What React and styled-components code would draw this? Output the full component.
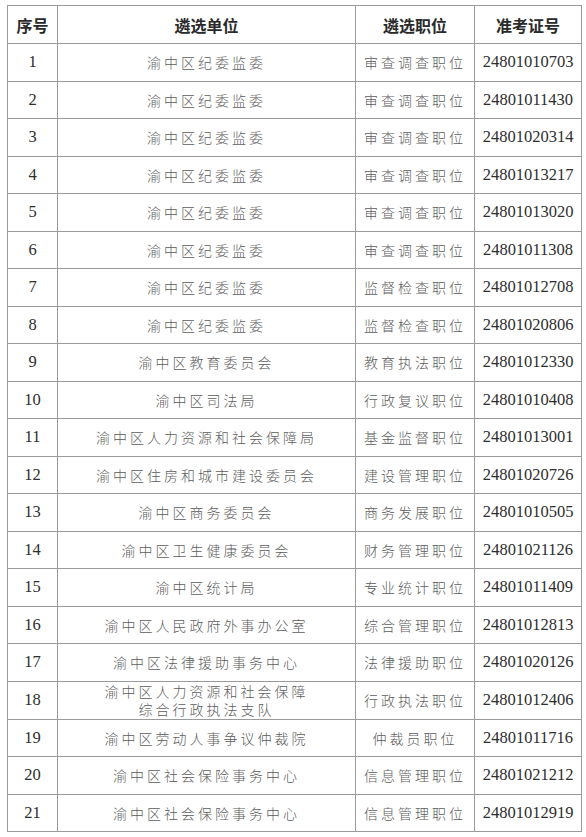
import { createGlobalStyle, styled } from "styled-components";

const GlobalStyle = createGlobalStyle`
  html, body {
    margin: 0;
    padding: 0;
    background: #ffffff;
  }
`;

const Page = styled.div`
  padding: 5px 0 0 7px;
`;

const Table = styled.table`
  border-collapse: collapse;
  table-layout: fixed;
  width: 574px;
  border: 1.5px solid #8c8c8c;
`;

const HeadCell = styled.th`
  height: 37px;
  padding: 0;
  border: 1px solid #9a9a9a;
  font-family: "Noto Sans CJK SC", "Noto Sans", sans-serif;
  font-size: 16px;
  font-weight: 700;
  color: #2a2a2a;
  text-align: center;
`;

const Row = styled.tr`
  height: 37.5px;
`;

const Cell = styled.td`
  padding: 0;
  border: 1px solid #9a9a9a;
  text-align: center;
  vertical-align: middle;
  line-height: 18.5px;
  font-family: ${({ $num }) =>
    $num
      ? '"Liberation Serif", "Times New Roman", serif'
      : '"Noto Sans CJK SC", sans-serif'};
  font-size: ${({ $num }) => ($num ? "16.5px" : "14px")};
  font-weight: ${({ $num }) => ($num ? 400 : 300)};
  letter-spacing: ${({ $num }) => ($num ? "0" : "3px")};
  color: ${({ $num }) => ($num ? "#2e2e2e" : "#5c5c5c")};
  white-space: nowrap;
`;

const Line = styled.span`
  display: block;
  height: 18.5px;
  overflow: visible;
`;

const rows = [
  ["渝中区纪委监委", "审查调查职位", "24801010703"],
  ["渝中区纪委监委", "审查调查职位", "24801011430"],
  ["渝中区纪委监委", "审查调查职位", "24801020314"],
  ["渝中区纪委监委", "审查调查职位", "24801013217"],
  ["渝中区纪委监委", "审查调查职位", "24801013020"],
  ["渝中区纪委监委", "审查调查职位", "24801011308"],
  ["渝中区纪委监委", "监督检查职位", "24801012708"],
  ["渝中区纪委监委", "监督检查职位", "24801020806"],
  ["渝中区教育委员会", "教育执法职位", "24801012330"],
  ["渝中区司法局", "行政复议职位", "24801010408"],
  ["渝中区人力资源和社会保障局", "基金监督职位", "24801013001"],
  ["渝中区住房和城市建设委员会", "建设管理职位", "24801020726"],
  ["渝中区商务委员会", "商务发展职位", "24801010505"],
  ["渝中区卫生健康委员会", "财务管理职位", "24801021126"],
  ["渝中区统计局", "专业统计职位", "24801011409"],
  ["渝中区人民政府外事办公室", "综合管理职位", "24801012813"],
  ["渝中区法律援助事务中心", "法律援助职位", "24801020126"],
  [["渝中区人力资源和社会保障", "综合行政执法支队"], "行政执法职位", "24801012406"],
  ["渝中区劳动人事争议仲裁院", "仲裁员职位", "24801011716"],
  ["渝中区社会保险事务中心", "信息管理职位", "24801021212"],
  ["渝中区社会保险事务中心", "信息管理职位", "24801012919"],
];

export default function App() {
  return (
    <Page>
      <GlobalStyle />
      <Table>
        <colgroup>
          <col style={{ width: 50 }} />
          <col style={{ width: 298 }} />
          <col style={{ width: 119 }} />
          <col style={{ width: 107 }} />
        </colgroup>
        <thead>
          <tr>
            <HeadCell>序号</HeadCell>
            <HeadCell>遴选单位</HeadCell>
            <HeadCell>遴选职位</HeadCell>
            <HeadCell>准考证号</HeadCell>
          </tr>
        </thead>
        <tbody>
          {rows.map(([unit, post, id], i) => (
            <Row key={id}>
              <Cell $num>{i + 1}</Cell>
              <Cell>
                {Array.isArray(unit)
                  ? unit.map((line) => <Line key={line}>{line}</Line>)
                  : unit}
              </Cell>
              <Cell>{post}</Cell>
              <Cell $num>{id}</Cell>
            </Row>
          ))}
        </tbody>
      </Table>
    </Page>
  );
}
